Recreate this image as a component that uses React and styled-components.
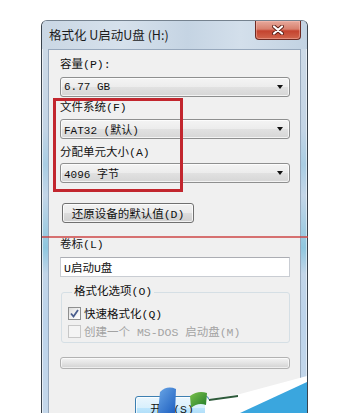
import React from "react";
import styled, { createGlobalStyle } from "styled-components";

const GlobalStyle = createGlobalStyle`
  html, body {
    margin: 0;
    padding: 0;
    background: #ffffff;
    overflow: hidden;
  }
  #root {
    width: 363px;
    height: 413px;
    overflow: hidden;
  }
`;

const SONG = `"Liberation Mono", "Noto Sans CJK SC", monospace`;

const Page = styled.div`
  position: relative;
  width: 363px;
  height: 413px;
  padding: 20px 0 0 41px;
  box-sizing: border-box;
`;

const Window = styled.div`
  width: 267px;
  box-sizing: border-box;
  border: 1px solid #3a434d;
  border-top-color: #75828f;
  border-bottom: none;
  border-radius: 6px 6px 0 0;
  padding: 0 6px;
  background: linear-gradient(
    180deg,
    #cfdbe7 0%,
    #c3d4e5 25%,
    #a9cde3 33%,
    #c4d6e8 40%,
    #8fc7df 52%,
    #c2d5e8 58%,
    #bcd3ea 68%,
    #c8d9ea 100%
  );
  box-shadow: inset 1px 0 0 rgba(255, 255, 255, 0.6),
    inset -1px 0 0 rgba(255, 255, 255, 0.5);
`;

const TitleBar = styled.div`
  height: 28px;
  display: flex;
  justify-content: space-between;
  align-items: flex-start;
  margin: 0 -6px;
  padding: 0 6px 0 7px;
  border-radius: 5px 5px 0 0;
  background: linear-gradient(
    90deg,
    #cad7e4 0%,
    #d6e1ec 30%,
    #c5d4e3 55%,
    #d3dfeb 75%,
    #c2d2e2 100%
  );
`;

const Title = styled.span`
  font-family: "Noto Sans CJK SC", "Liberation Sans", sans-serif;
  font-size: 12.5px;
  line-height: 28px;
  color: #1b1b1b;
  white-space: nowrap;
`;

const CloseButton = styled.div`
  width: 46px;
  height: 19px;
  box-sizing: border-box;
  border: 1px solid #6e2a22;
  border-top: none;
  border-radius: 0 0 4px 4px;
  background: linear-gradient(
    180deg,
    #e7a99c 0%,
    #d8806e 45%,
    #c4432f 55%,
    #d0654c 100%
  );
  display: flex;
  align-items: center;
  justify-content: center;
  box-shadow: inset 0 0 0 1px rgba(255, 200, 190, 0.4);
`;

const Client = styled.div`
  height: 400px;
  border: 1px solid #97a8bc;
  border-bottom: none;
  background: #f0f0f0;
  padding: 7px 10px 0 11px;
  display: flex;
  flex-direction: column;
  align-items: flex-start;
`;

const Label = styled.div`
  font-family: ${SONG};
  font-size: 11.5px;
  line-height: 16px;
  height: 16px;
  color: #111;
  white-space: nowrap;
  margin-top: ${(p) => p.$top || 0}px;
`;

const Combo = styled.div`
  width: 230px;
  height: 20px;
  box-sizing: border-box;
  margin-top: ${(p) => p.$top || 0}px;
  border: 1px solid #8e8f8f;
  border-radius: 3px;
  background: linear-gradient(
    180deg,
    #f4f4f4 0%,
    #ececec 50%,
    #e1e1e1 51%,
    #d6d6d6 100%
  );
  box-shadow: inset 0 0 0 1px rgba(255, 255, 255, 0.7);
  display: flex;
  align-items: center;
  justify-content: space-between;
  padding: 0 4px 0 3px;
  font-family: ${SONG};
  font-size: 11px;
  color: #111;
  white-space: nowrap;
`;

const Arrow = styled.span`
  width: 0;
  height: 0;
  border-left: 3.5px solid transparent;
  border-right: 3.5px solid transparent;
  border-top: 4px solid #111;
  margin-right: 2px;
`;

const Button = styled.div`
  width: ${(p) => p.$w}px;
  height: ${(p) => p.$h}px;
  box-sizing: border-box;
  margin-top: ${(p) => p.$top || 0}px;
  margin-left: ${(p) => p.$left || 0}px;
  border: 1px solid ${(p) => (p.$default ? "#3c7fb1" : "#707070")};
  border-radius: 3px;
  background: ${(p) =>
    p.$default
      ? "linear-gradient(180deg, #eaf6fd 0%, #d9f0fc 50%, #bee6fd 51%, #a7d9f5 100%)"
      : "linear-gradient(180deg, #f2f2f2 0%, #ebebeb 50%, #dddddd 51%, #cfcfcf 100%)"};
  box-shadow: inset 0 0 0 1px rgba(255, 255, 255, 0.75);
  display: flex;
  align-items: center;
  justify-content: center;
  font-family: ${SONG};
  font-size: 11.5px;
  color: #111;
  white-space: nowrap;
`;

const TextBox = styled.div`
  width: 230px;
  height: 20px;
  box-sizing: border-box;
  margin-top: 4px;
  border: 1px solid #c9cdd3;
  border-top-color: #abadb3;
  background: #ffffff;
  padding: 0 3px;
  display: flex;
  align-items: center;
  font-family: ${SONG};
  font-size: 11.5px;
  color: #111;
`;

const Group = styled.fieldset`
  width: 229px;
  box-sizing: border-box;
  margin: 7px 0 0 1px;
  padding: 5px 6px 3px 6px;
  border: 1px solid #d5dfe5;
  border-radius: 3px;
  min-width: 0;
  display: flex;
  flex-direction: column;
  gap: 2px;
`;

const Legend = styled.legend`
  font-family: ${SONG};
  font-size: 11.5px;
  line-height: 16px;
  color: #111;
  padding: 0 2px;
  margin-left: 4px;
`;

const CheckRow = styled.div`
  display: flex;
  align-items: center;
  gap: 3px;
  height: 16px;
  font-family: ${SONG};
  font-size: 11.5px;
  color: ${(p) => (p.$disabled ? "#a3a3a3" : "#111")};
  white-space: nowrap;
`;

const Box = styled.span`
  width: 13px;
  height: 13px;
  box-sizing: border-box;
  border: 1px solid ${(p) => (p.$disabled ? "#c7c7c7" : "#8e8f8f")};
  background: ${(p) =>
    p.$disabled
      ? "#f4f4f4"
      : "linear-gradient(135deg, #dcdcdc 0%, #f2f2f2 50%, #ffffff 100%)"};
  display: flex;
  align-items: center;
  justify-content: center;
`;

const Progress = styled.div`
  width: 230px;
  height: 12px;
  box-sizing: border-box;
  margin-top: 14px;
  border: 1px solid #b2b2b2;
  border-radius: 3px;
  background: linear-gradient(180deg, #f3f3f3 0%, #e4e4e4 50%, #d2d2d2 100%);
  box-shadow: inset 0 0 0 1px rgba(255, 255, 255, 0.6);
`;

const Highlight = styled.div`
  position: absolute;
  left: 53px;
  top: 98px;
  width: 130px;
  height: 94px;
  box-sizing: border-box;
  border: 3px solid #c2262e;
  pointer-events: none;
`;

const Divider = styled.div`
  position: absolute;
  left: 42px;
  top: 236px;
  width: 266px;
  height: 2px;
  background: rgba(205, 70, 70, 0.75);
  pointer-events: none;
`;

const Watermark = styled.svg`
  position: absolute;
  left: 0;
  top: 0;
  pointer-events: none;
`;

function CloseGlyph() {
  return (
    <svg width="12" height="10" viewBox="0 0 12 10">
      <path d="M2 1.5 L10 8.5 M10 1.5 L2 8.5" stroke="#5c2018" strokeWidth="4" strokeLinecap="round" />
      <path d="M2 1.5 L10 8.5 M10 1.5 L2 8.5" stroke="#ffffff" strokeWidth="2.2" strokeLinecap="round" />
    </svg>
  );
}

function Check() {
  return (
    <svg width="9" height="9" viewBox="0 0 9 9">
      <path d="M1 4.5 L3.5 7.5 L8 1" fill="none" stroke="#4a5e8e" strokeWidth="1.8" />
    </svg>
  );
}

export default function App() {
  return (
    <Page>
      <GlobalStyle />
      <Window>
        <TitleBar>
          <Title>格式化 U启动U盘 (H:)</Title>
          <CloseButton>
            <CloseGlyph />
          </CloseButton>
        </TitleBar>
        <Client>
          <Label>容量(P):</Label>
          <Combo $top={4}>
            6.77 GB
            <Arrow />
          </Combo>
          <Label $top={3}>文件系统(F)</Label>
          <Combo $top={3}>
            FAT32 (默认)
            <Arrow />
          </Combo>
          <Label $top={6}>分配单元大小(A)</Label>
          <Combo $top={2}>
            4096 字节
            <Arrow />
          </Combo>
          <Button $w={132} $h={20} $top={20} $left={2}>
            还原设备的默认值(D)
          </Button>
          <Label $top={14}>卷标(L)</Label>
          <TextBox>U启动U盘</TextBox>
          <Group>
            <Legend>格式化选项(O)</Legend>
            <CheckRow>
              <Box>
                <Check />
              </Box>
              快速格式化(Q)
            </CheckRow>
            <CheckRow $disabled>
              <Box $disabled />
              创建一个 MS-DOS 启动盘(M)
            </CheckRow>
          </Group>
          <Progress />
          <Button $default $w={74} $h={23} $top={27} $left={75}>
            开始(S)
          </Button>
        </Client>
      </Window>
      <Highlight />
      <Divider />
      <Watermark width="363" height="413" viewBox="0 0 363 413">
        <defs>
          <linearGradient id="wmBlue" x1="0" y1="0" x2="1" y2="1">
            <stop offset="0" stopColor="#6aa6e6" />
            <stop offset="1" stopColor="#1d5fc0" />
          </linearGradient>
          <linearGradient id="wmGreen" x1="0" y1="0" x2="1" y2="1">
            <stop offset="0" stopColor="#7cc24a" />
            <stop offset="1" stopColor="#1f7a2a" />
          </linearGradient>
        </defs>
        <polygon points="205,400 240,394 307,376 307,413 205,413" fill="#ffffff" />
        <path d="M160 392 Q167 385 176 389 L175 413 L158 413 Z" fill="url(#wmBlue)" />
        <path d="M190 396 Q198 390 207 393 L206 405 Q198 402 191 408 Z" fill="url(#wmGreen)" />
        <path d="M209 399 L238 395 L238 397 L209 401 Z" fill="#2d5a3a" />
        <polygon points="240,413 307,382 307,413" fill="#3aa6de" />
      </Watermark>
    </Page>
  );
}
